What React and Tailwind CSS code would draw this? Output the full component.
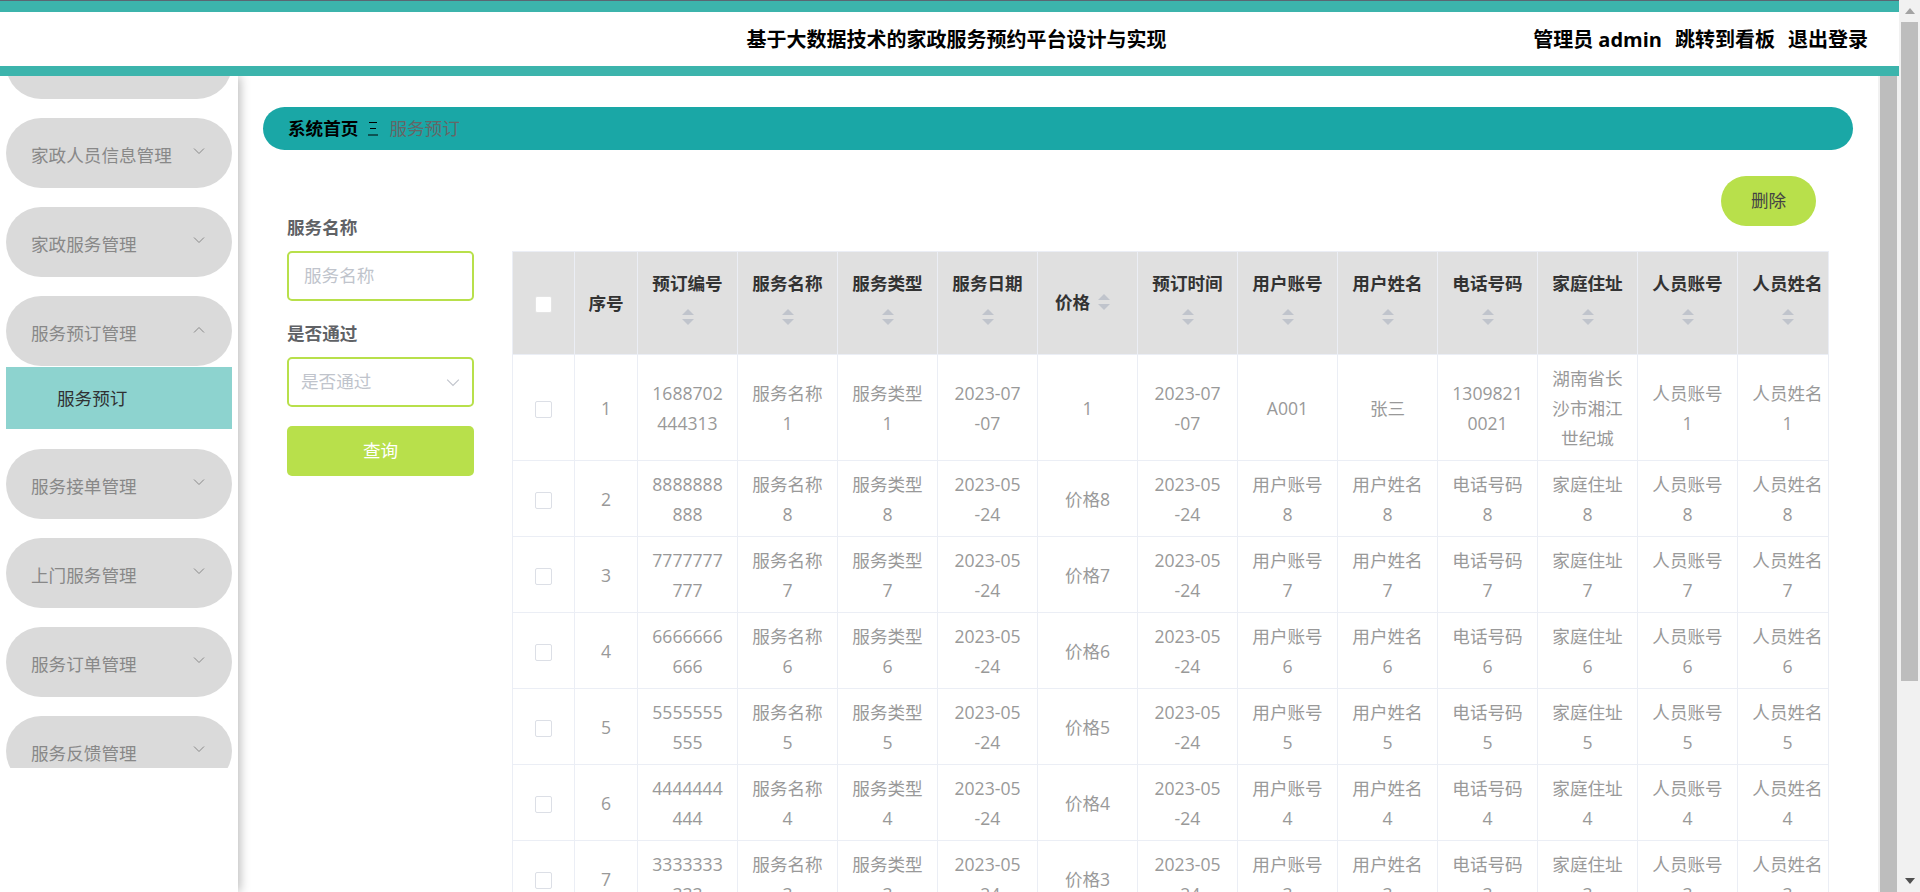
import React from 'react';

const menus = [
  { name: '用户管理' },
  { name: '家政人员信息管理' },
  { name: '家政服务管理' },
  { name: '服务预订管理', open: true, children: ['服务预订'] },
  { name: '服务接单管理' },
  { name: '上门服务管理' },
  { name: '服务订单管理' },
  { name: '服务反馈管理' },
];

const columns = ['预订编号', '服务名称', '服务类型', '服务日期', '价格', '预订时间', '用户账号', '用户姓名', '电话号码', '家庭住址', '人员账号', '人员姓名'];

const firstRow = ['1688702\n444313', '服务名称\n1', '服务类型\n1', '2023-07\n-07', '1', '2023-07\n-07', 'A001', '张三', '1309821\n0021', '湖南省长\n沙市湘江\n世纪城', '人员账号\n1', '人员姓名\n1'];

const makeRow = (n) => [
  `${String(n).repeat(7)}\n${String(n).repeat(3)}`,
  `服务名称\n${n}`,
  `服务类型\n${n}`,
  '2023-05\n-24',
  `价格${n}`,
  '2023-05\n-24',
  `用户账号\n${n}`,
  `用户姓名\n${n}`,
  `电话号码\n${n}`,
  `家庭住址\n${n}`,
  `人员账号\n${n}`,
  `人员姓名\n${n}`,
];

const rows = [firstRow, ...[8, 7, 6, 5, 4, 3].map(makeRow)];

const Chevron = ({ up = false, size = 12, className = '' }) => (
  <svg width={size} height={size * 7 / 12} viewBox="0 0 12 7" fill="none" stroke="currentColor" strokeWidth="1" className={className}>
    <path d={up ? 'M1 6.5 6 1.5l5 5' : 'M1 .5l5 5 5-5'} />
  </svg>
);

const SortCaret = () => (
  <svg width="12" height="16" viewBox="0 0 12 16" fill="#c0c4cc" className="block">
    <path d="M6 0l6 6H0z" />
    <path d="M0 10h12l-6 6z" />
  </svg>
);

const Checkbox = ({ header = false }) => (
  <span className={`inline-block w-[17px] h-[17px] rounded-[2px] bg-white align-middle border ${header ? 'border-[#e4e4e4]' : 'border-[#dcdfe6]'}`}></span>
);

const MenuItem = ({ item }) => (
  <div className="mb-[19px]">
    <div className="flex items-center justify-between h-[70px] rounded-[35px] bg-[#dadada] pl-[25px] pr-[27px] text-[17.6px] text-[#888]">
      <span className="pt-1">{item.name}</span>
      <Chevron up={item.open} className="mb-1" />
    </div>
    {item.children && item.children.map((child) => (
      <div key={child} className="flex items-center h-[62px] mt-px mb-[20px] pl-[51px] bg-[#8dd3cf] text-[17.6px] text-[#303133]">
        {child}
      </div>
    ))}
  </div>
);

const Header = () => (
  <header className="flex items-center h-[76px] border-t border-[#5a6672] relative z-10 bg-white">
    <div className="flex-1 flex items-center h-full pt-[2px] border-t-[11px] border-b-[10px] border-[#3cb4ac] text-[20px] font-bold text-black">
      <div className="flex-1 pl-[380px] text-center">基于大数据技术的家政服务预约平台设计与实现</div>
      <div className="flex gap-[13px] pr-[31px]">
        <span>管理员 admin</span>
        <span>跳转到看板</span>
        <span>退出登录</span>
      </div>
    </div>
  </header>
);

const Scrollbar = ({ children }) => (
  <div className="w-[21px] shrink-0 bg-[#f1f1f1] px-[2px]">{children}</div>
);

const SearchForm = () => (
  <div className="w-[187px] shrink-0 ml-[49px] mt-[36px]">
    <div className="h-[30px] leading-[30px] mb-[9px] text-[17.6px] font-bold text-[#606266]">服务名称</div>
    <input
      placeholder="服务名称"
      className="block w-full h-[50px] mb-[17px] px-[15px] pb-[2px] border-2 border-[#b8e04b] rounded-[5px] bg-white text-[17.6px] outline-none placeholder:text-[#c0c4cc]"
    />
    <div className="h-[30px] leading-[30px] mb-[9px] text-[17.6px] font-bold text-[#606266]">是否通过</div>
    <div className="flex items-center justify-between h-[50px] mb-[19px] pl-[12px] pr-[12px] pb-[2px] border-2 border-[#b8e04b] rounded-[5px] bg-white text-[17.6px] text-[#c0c4cc]">
      <span>是否通过</span>
      <Chevron size={14} className="mt-[5px]" />
    </div>
    <button className="block w-full h-[50px] pb-[2px] rounded-[5px] bg-[#b8e04b] text-[17.6px] text-white">查询</button>
  </div>
);

const BookingTable = () => (
  <div className="w-[1317px] border-l border-t border-r border-[#ebeef5] overflow-hidden">
    <table className="table-fixed border-separate border-spacing-0 w-[1325px] text-[17.6px] leading-[30px]">
      <colgroup>
        <col className="w-[62px]" />
        <col className="w-[63px]" />
        {columns.map((c) => <col key={c} className="w-[100px]" />)}
      </colgroup>
      <thead>
        <tr className="h-[103px] bg-[#e0e0e0] text-[#333] font-bold">
          <th className="border-r border-b border-[#ebeef5] p-0 pb-[2px]"><Checkbox header /></th>
          <th className="border-r border-b border-[#ebeef5] p-0">序号</th>
          {columns.map((c) => (
            <th key={c} className="border-r border-b border-[#ebeef5] p-0 pb-[2px]">
              {c === '价格' ? (
                <div className="flex items-center justify-center gap-[8px] pr-[10px]">
                  <span>{c}</span>
                  <SortCaret />
                </div>
              ) : (
                <div className="flex flex-col items-center">
                  <span>{c}</span>
                  <div className="flex items-center h-[38px]"><SortCaret /></div>
                </div>
              )}
            </th>
          ))}
        </tr>
      </thead>
      <tbody className="text-[#999]">
        {rows.map((row, i) => (
          <tr key={i} className={i === 0 ? 'h-[106px]' : 'h-[76px]'}>
            <td className="border-r border-b border-[#ebeef5] p-0 text-center"><Checkbox /></td>
            <td className="border-r border-b border-[#ebeef5] p-0 text-center">{i + 1}</td>
            {row.map((value, j) => (
              <td key={j} className="border-r border-b border-[#ebeef5] p-0 text-center whitespace-pre-line">{value}</td>
            ))}
          </tr>
        ))}
      </tbody>
    </table>
  </div>
);

export default function App() {
  return (
    <div className="flex h-screen overflow-hidden bg-white font-['Open_Sans','Noto_Sans_CJK_SC',sans-serif]">
      <div className="flex-1 flex flex-col min-w-0">
        <Header />
        <div className="flex flex-1 min-h-0">
          {/* Left menu, scrolled a bit like in the shot */}
          <aside className="w-[238px] shrink-0 bg-white shadow-[2px_0_10px_rgba(0,0,0,0.28)] relative z-[1]">
            <div className="h-[692px] overflow-hidden">
              <div className="-mt-[47px] px-[6px]">
                {menus.map((m) => <MenuItem key={m.name} item={m} />)}
              </div>
            </div>
          </aside>

          <main className="flex-1 min-w-0 overflow-hidden pt-[31px]">
            <div className="flex items-center h-[43px] w-[1590px] ml-[25px] mb-[26px] pl-[25px] rounded-full bg-[#1aa7a6] text-[17.6px]">
              <span className="font-bold text-black">系统首页</span>
              <svg width="12" height="15" viewBox="0 0 12 15" className="ml-[9px] mr-[10px]" stroke="#000" strokeWidth="1.2">
                <path d="M2 1.5h8M3 7.5h6M1 14h10" />
              </svg>
              <span className="text-[#666]">服务预订</span>
            </div>
            <div className="flex items-start">
              <SearchForm />
              <div className="ml-[38px]">
                <div className="flex justify-end pr-[13px] mb-[25px]">
                  <button className="w-[95px] h-[50px] pb-[2px] rounded-full bg-[#b8e04b] text-[17.6px] text-[#444]">删除</button>
                </div>
                <BookingTable />
              </div>
            </div>
          </main>

          <Scrollbar>
            <div className="h-full bg-[#bdbdbd]"></div>
          </Scrollbar>
        </div>
      </div>

      {/* Page scrollbar */}
      <Scrollbar>
        <div className="flex flex-col h-full">
          <div className="flex justify-center items-center h-[22px]">
            <svg width="10" height="6" viewBox="0 0 10 6" fill="#a3a3a3"><path d="M5 0l5 6H0z" /></svg>
          </div>
          <div className="h-[659px] bg-[#bdbdbd]"></div>
          <div className="flex justify-center pt-[197px]">
            <svg width="10" height="6" viewBox="0 0 10 6" fill="#505050"><path d="M0 0h10L5 6z" /></svg>
          </div>
        </div>
      </Scrollbar>
    </div>
  );
}
